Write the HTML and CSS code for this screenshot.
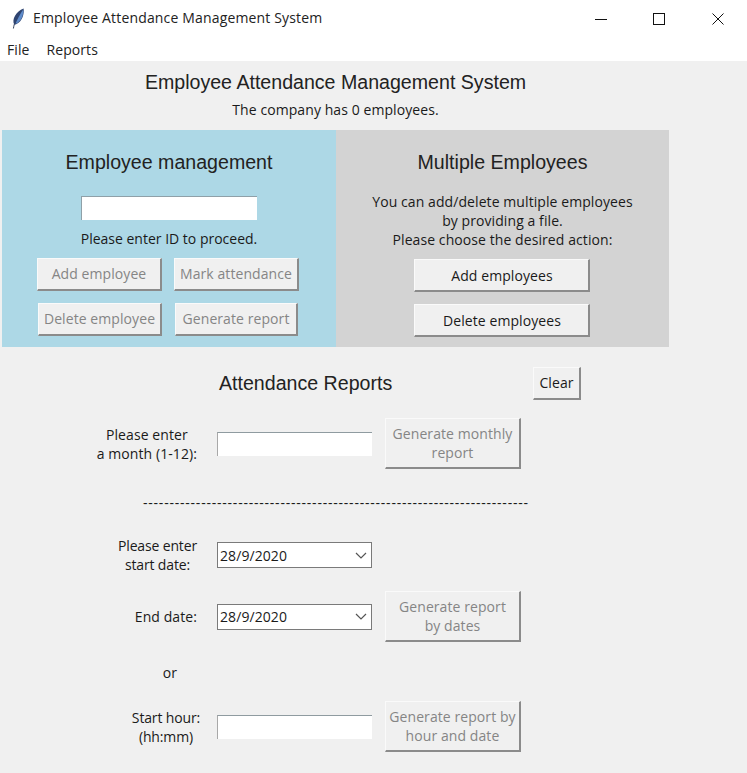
FILE: index.html
```html
<!DOCTYPE html>
<html lang="en">
<head>
<meta charset="utf-8">
<title>Employee Attendance Management System</title>
<link rel="stylesheet" href="styles.css">
</head>
<body>
<header class="titlebar">
  <svg class="feather" width="14" height="22" viewBox="0 0 14 22" aria-hidden="true">
    <path d="M2.4 20.5 C2.6 19 3 17.5 3.4 16" fill="none" stroke="#3a4660" stroke-width="1"/>
    <path d="M3.2 16.5 C0.6 11.5 5 3.5 12.6 0.6 C13.4 6 11.4 13.5 5.6 16 C4.8 16.4 4 16.6 3.2 16.5 Z" fill="#2f4470"/>
    <path d="M4.6 15.6 C6.6 11 9 6 12.2 1.6 C12.8 6.4 10.6 13 5.6 15.4 Z" fill="#5f8ccb"/>
  </svg>
  <span class="app-title">Employee Attendance Management System</span>
  <div class="win-controls">
    <svg width="12" height="12" viewBox="0 0 12 12" aria-hidden="true"><path d="M0 6.5H12" stroke="#111" fill="none"/></svg>
    <svg width="12" height="12" viewBox="0 0 12 12" aria-hidden="true"><rect x="0.5" y="0.5" width="11" height="11" stroke="#111" fill="none"/></svg>
    <svg class="win-close" width="12" height="12" viewBox="0 0 12 12" aria-hidden="true"><path d="M0.5 0.5L11.5 11.5M11.5 0.5L0.5 11.5" stroke="#111" fill="none"/></svg>
  </div>
</header>
<nav class="menubar"><span>File</span><span>Reports</span></nav>
<main class="content">
  <h1 class="heading main-heading">Employee Attendance Management System</h1>
  <p class="company">The company has 0 employees.</p>
  <section class="panels">
    <div class="panel panel-blue">
      <h2 class="heading">Employee management</h2>
      <div class="entry id-entry"></div>
      <p class="id-hint">Please enter ID to proceed.</p>
      <div class="btn-grid">
        <button class="btn off" disabled>Add employee</button>
        <button class="btn off" disabled>Mark attendance</button>
        <button class="btn off btn-delete" disabled>Delete employee</button>
        <button class="btn off btn-generate" disabled>Generate report</button>
      </div>
    </div>
    <div class="panel panel-grey">
      <h2 class="heading">Multiple Employees</h2>
      <p class="multi-text">You can add/delete multiple employees<br>by providing a file.<br>Please choose the desired action:</p>
      <button class="btn multi-btn">Add employees</button>
      <button class="btn multi-btn">Delete employees</button>
    </div>
  </section>
  <section class="reports-head">
    <h2 class="heading">Attendance Reports</h2>
    <button class="btn clear-btn">Clear</button>
  </section>
  <section class="reports">
    <div class="lab">Please enter<br>a month (1-12):</div>
    <div class="entry field"></div>
    <button class="btn off report-btn" disabled>Generate monthly<br>report</button>

    <div class="dashes">-------------------------------------------------------------------------</div>

    <div class="lab lab-tight">Please enter<br>start date:</div>
    <div class="combo"><span>28/9/2020</span><svg width="12" height="7" viewBox="0 0 12 7" aria-hidden="true"><path d="M1 1L6 6L11 1" fill="none" stroke="#555" stroke-width="1.2"/></svg></div>
    <div></div>

    <div class="lab">End date:</div>
    <div class="combo"><span>28/9/2020</span><svg width="12" height="7" viewBox="0 0 12 7" aria-hidden="true"><path d="M1 1L6 6L11 1" fill="none" stroke="#555" stroke-width="1.2"/></svg></div>
    <button class="btn off report-btn" disabled>Generate report<br>by dates</button>

    <div class="lab lab-or">or</div>
    <div></div>
    <div></div>

    <div class="lab lab-hour lab-tight">Start hour:<br>(hh:mm)</div>
    <div class="entry field"></div>
    <button class="btn off report-btn" disabled>Generate report by<br>hour and date</button>
  </section>
</main>
</body>
</html>
```
FILE: styles.css
```css
* { box-sizing: border-box; }
html, body { margin: 0; height: 100%; }
body {
  width: 747px;
  height: 773px;
  overflow: hidden;
  display: flex;
  flex-direction: column;
  background: #f0f0f0;
  color: #1a1a1a;
  font: 14px/19px "Open Sans", "Noto Sans", sans-serif;
  letter-spacing: 0.08px;
}
h1, h2, p { margin: 0; font-weight: 400; }

.titlebar {
  height: 38px;
  flex: none;
  display: flex;
  align-items: center;
  background: #fff;
  padding-left: 11px;
}
.feather { flex: none; }
.app-title { margin-left: 8px; margin-bottom: 3px; color: #222; letter-spacing: 0.16px; }
.win-controls {
  margin-left: auto;
  padding-right: 23px;
  display: flex;
  gap: 46px;
}
.win-close { margin-left: 1px; }
.menubar {
  height: 23px;
  flex: none;
  display: flex;
  gap: 17px;
  align-items: center;
  padding-left: 7px;
  background: #fff;
  color: #222;
}

.content { flex: 1; width: 669px; display: flex; flex-direction: column; }
.heading { font: 19.6px/24px "Liberation Sans", Arial, sans-serif; letter-spacing: 0; color: #222; }
.main-heading { margin-top: 9px; text-align: center; padding-left: 2px; }
.company { margin-top: 6px; text-align: center; padding-left: 2px; }

.panels { margin-top: 11px; height: 217px; padding-left: 2px; display: flex; }
.panel { flex: 1; display: flex; flex-direction: column; align-items: center; }
.panel-blue { flex: 0 0 334px; background: #add8e6; padding-top: 20px; }
.panel-grey { background: #d3d3d3; padding-top: 20px; }

.entry { background: #fff; border-top: 1px solid #8f9ba0; border-left: 1px solid #a8a8a8; }
.id-entry { width: 176px; height: 24px; margin-top: 22px; border-color: #8fa0a8; }
.id-hint { margin-top: 9px; letter-spacing: 0; }
.btn {
  font: inherit;
  letter-spacing: inherit;
  color: #1a1a1a;
  background: #f0f0f0;
  padding: 0;
  border-style: solid;
  border-width: 1px 2px 2px 1px;
  border-color: #fafafa #8b8b8b #8b8b8b #fafafa;
  border-radius: 0;
}
.btn.off { color: #858585; }
.btn-grid {
  margin: 10px 0 0 -2px;
  display: grid;
  grid-template-columns: 125px 125px;
  grid-auto-rows: 33px;
  column-gap: 12px;
  row-gap: 12px;
}
.btn-grid .btn { padding-bottom: 2px; }
.btn-delete { width: 124px; justify-self: end; }
.btn-generate { width: 123px; justify-self: end; margin-right: 1px; }
.multi-text { margin-top: 18px; text-align: center; }
.multi-btn { width: 176px; height: 33px; margin: 10px 2px 0 0; padding-left: 2px; }
.multi-btn + .multi-btn { margin-top: 12px; }

.reports-head { height: 33px; margin-top: 20px; padding-right: 88px; display: flex; justify-content: space-between; }
.reports-head .heading { margin: 4px 0 0 219px; }
.clear-btn { width: 48px; height: 33px; padding-bottom: 2px; }

.reports {
  margin-top: 18px;
  padding-left: 60px;
  display: grid;
  grid-template-columns: 157px 155px 149px;
  grid-template-rows: 51px 58px 56px 67px 44px 65px;
  align-items: center;
}
.lab { text-align: center; justify-self: end; margin-right: 20px; }
.lab-tight { letter-spacing: -0.15px; }
.lab-or { margin-right: 40px; }
.lab-hour { margin-right: 17px; }
.field { width: 155px; height: 24px; }
.report-btn { grid-column: 3; width: 136px; height: 51px; margin-left: 13px; line-height: 19px; }
.dashes {
  grid-column: 1 / -1;
  letter-spacing: 0.78px;
  padding: 8px 0 0 83px;
  white-space: nowrap;
}
.combo {
  width: 155px;
  height: 26px;
  background: #fff;
  border: 1px solid #7a7a7a;
  padding: 0 4px 0 2px;
  display: flex;
  align-items: center;
  justify-content: space-between;
}
```
